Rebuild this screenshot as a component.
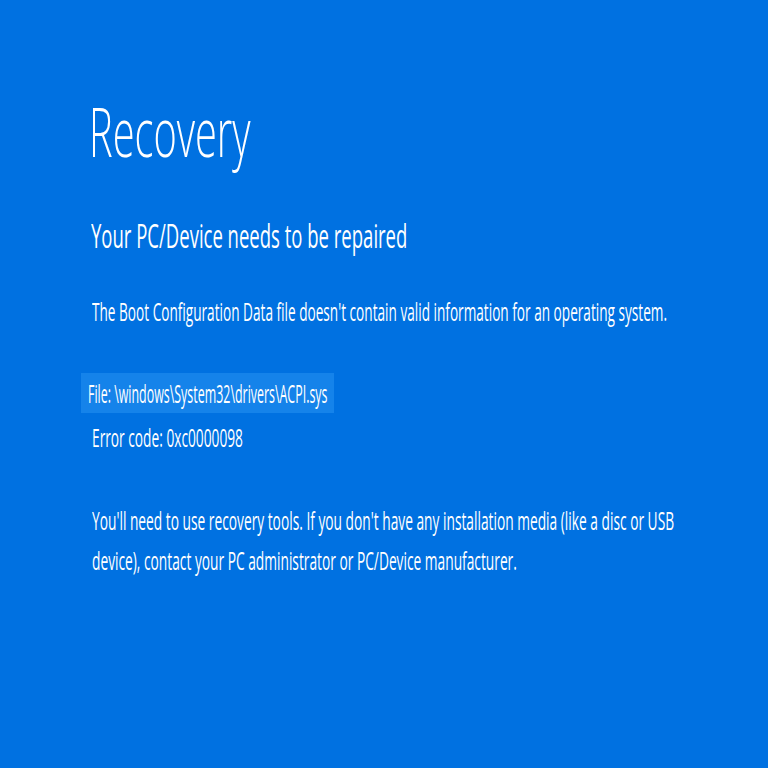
import React from 'react';

const RecoveryScreen = () => {
  return (
    <div className="w-[768px] h-[768px] overflow-hidden bg-[#0071e1] text-white font-['Open_Sans',sans-serif]">
      <div className="pt-[91px] pl-[92px]">
        <div className="-ml-[3px] h-[80px] leading-[80px] text-[68px] font-light whitespace-nowrap origin-left scale-x-[0.585]">
          Recovery
        </div>
        <div className="-ml-[1px] mt-[45px] h-[40px] leading-[40px] text-[33px] whitespace-nowrap origin-left scale-x-[0.561]">
          Your PC/Device needs to be repaired
        </div>
        <div className="mt-[40px] h-[30px] leading-[30px] text-[25px] whitespace-nowrap origin-left scale-x-[0.545]">
          The Boot Configuration Data file doesn't contain valid information for an operating system.
        </div>
        <div className="mt-[47px] -ml-[11px] w-[253px] h-[40px] bg-[#1583ea] pl-[7px]">
          <div className="h-[40px] leading-[40px] text-[26px] whitespace-nowrap origin-left scale-x-[0.478]">
            File: \windows\System32\drivers\ACPI.sys
          </div>
        </div>
        <div className="mt-[9px] h-[30px] leading-[30px] text-[25px] whitespace-nowrap origin-left scale-x-[0.549]">
          Error code: 0xc0000098
        </div>
        <div className="mt-[48px] leading-[40px] text-[26px] whitespace-nowrap origin-left scale-x-[0.529]">
          <div>You'll need to use recovery tools. If you don't have any installation media (like a disc or USB</div>
          <div>device), contact your PC administrator or PC/Device manufacturer.</div>
        </div>
      </div>
    </div>
  );
};

export default function App() {
  return <RecoveryScreen />;
}
